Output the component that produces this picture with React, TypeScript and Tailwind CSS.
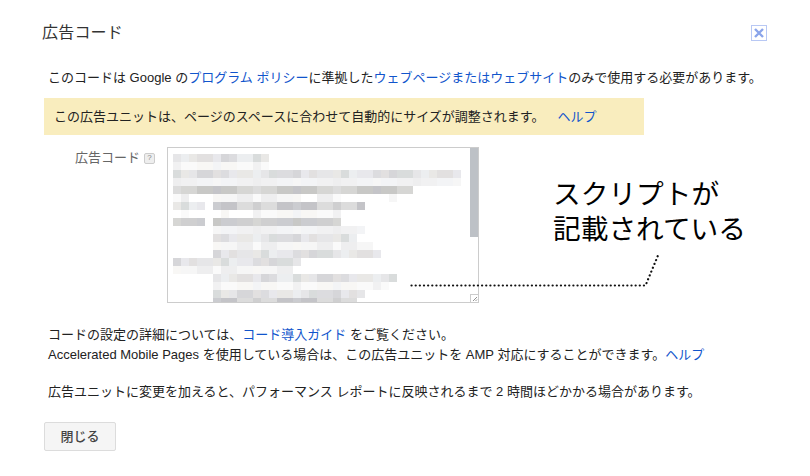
const palette = ["#e6e6e8", "#dcdcdf", "#e9e8e6", "#d6d6d9", "#eceef0", "#e2e0e0", "#d9dcdc", "#e8e8ec"];
const fainter = ["#f6f6f6", "#f1f1f2", "#f8f7f5", "#eeeeef", "#f3f4f6", "#fafafa"];
const darker = ["#cfcfd0", "#c4c4c8", "#d6d6d4", "#cbccd0", "#dcdcdc", "#c8c8c6"];

// [start, end, tone] runs for each row of the blurred script
const rows: [number, number, number][][] = [
  [[0, 11, 0]],
  [[0, 11, 1]],
  [[0, 35, 0]],
  [[0, 35, 1]],
  [[0, 29, 2]],
  [[0, 1, 1], [5, 15, 1], [18, 20, 1], [27, 27, 1]],
  [[0, 3, 0], [5, 23, 2]],
  [[1, 1, 1], [6, 6, 1], [10, 20, 1]],
  [[0, 3, 2], [5, 20, 2]],
  [[5, 23, 1]],
  [[5, 22, 0]],
  [[5, 24, 1]],
  [[5, 25, 0]],
  [[0, 15, 0]],
  [[0, 14, 1]],
  [[5, 27, 0]],
  [[5, 26, 1]],
  [[5, 23, 0]],
  [[5, 22, 2]],
];

const tone = (r: number, c: number, t: number) => {
  const list = t === 2 ? darker : t === 1 ? fainter : palette;
  return list[(r * 7 + c * 3 + ((c * c) % 5)) % list.length];
};

const BlurredCode = () => (
  <div className="flex flex-col">
    {rows.map((runs, r) => (
      <div key={r} className="flex h-2">
        {Array.from({ length: 36 }).map((_, c) => {
          const run = runs.find((x) => c >= x[0] && c <= x[1]);
          return (
            <div
              key={c}
              className="h-2 w-2 shrink-0"
              style={{ backgroundColor: run ? tone(r, c, run[2]) : "transparent" }}
            />
          );
        })}
      </div>
    ))}
  </div>
);

const Link = ({ children }: { children: React.ReactNode }) => (
  <span className="text-[#15c]">{children}</span>
);

export default function App() {
  return (
    <div className="relative h-[476px] w-[810px] overflow-hidden bg-white font-['Liberation_Sans','Noto_Sans_CJK_JP',sans-serif] text-[13px] text-[#222]">
      <div className="flex flex-col pl-11 pr-11">
        <div className="flex h-[63px] items-start justify-between pt-[21px]">
          <h1 className="-ml-0.5 text-base leading-6 font-normal tracking-[0.2px] text-[#333]">広告コード</h1>
          <button className="mt-1 -mr-[1px] flex h-4 w-4 items-center justify-center border border-[#b8c8f4]">
            <svg width="12" height="12" viewBox="0 0 12 12">
              <path d="M2 2L10 10M10 2L2 10" stroke="#8aa4ea" strokeWidth="2.4" />
            </svg>
          </button>
        </div>

        <p className="ml-1 h-[35px] pt-[5px] text-[13px] leading-5 whitespace-nowrap">
          このコードは Google の<Link>プログラム ポリシー</Link>に準拠した<Link>ウェブページまたはウェブサイト</Link>のみで使用する必要があります。
        </p>

        <div className="flex h-[37px] w-[600px] items-center bg-[#f9edbe] pl-[10px] whitespace-nowrap">
          この広告ユニットは、ページのスペースに合わせて自動的にサイズが調整されます。
          <span className="ml-[13px]"><Link>ヘルプ</Link></span>
        </div>

        <div className="mt-3 flex">
          <div className="flex w-[111px] justify-end pt-[1px]">
            <span className="flex h-5 items-center gap-1 whitespace-nowrap text-[#666]">
              広告コード
              <span className="flex h-[11px] w-[11px] items-center justify-center rounded-[2px] border border-[#ccc] bg-[#eee] text-[8px] leading-none text-[#888]">?</span>
            </span>
          </div>
          <div className="relative ml-[12px] h-[156px] w-[312px] overflow-hidden border border-[#ccc] bg-white pt-[6px] pl-[5px]">
            <BlurredCode />
            <div className="absolute top-0 right-0 h-[89px] w-2 bg-[#bdc1c6]" />
            <div className="absolute right-0 bottom-0 flex h-2 w-2 items-center justify-center border-t border-l border-[#ccc] bg-white">
              <svg width="6" height="6" viewBox="0 0 6 6">
                <path d="M1 5L5 1M3.5 5L5 3.5" stroke="#777" strokeWidth="0.8" />
              </svg>
            </div>
          </div>
        </div>

        <div className="mt-[22px] ml-1 flex flex-col leading-5 whitespace-nowrap">
          <p>コードの設定の詳細については、<Link>コード導入ガイド</Link> をご覧ください。</p>
          <p>Accelerated Mobile Pages を使用している場合は、この広告ユニットを AMP 対応にすることができます。<Link>ヘルプ</Link></p>
          <p className="mt-[17px]">広告ユニットに変更を加えると、パフォーマンス レポートに反映されるまで 2 時間ほどかかる場合があります。</p>
        </div>

        <button className="mt-5 h-[29px] w-[72px] rounded-[2px] border border-[#dcdcdc] bg-[#f5f5f5] text-[13px] font-medium text-[#444]">
          閉じる
        </button>
      </div>

      {/* annotation drawn on top of the screenshot */}
      <p className="absolute top-[177px] left-[553px] text-[27.7px] leading-[35px] whitespace-nowrap text-black">
        スクリプトが
        <br />
        記載されている
      </p>
      <svg className="absolute top-[250px] left-[408px]" width="256" height="40" viewBox="0 0 256 40">
        <path
          d="M3.5 35.5H237.5L251 3"
          fill="none"
          stroke="#111"
          strokeWidth="2.2"
          strokeLinecap="round"
          strokeDasharray="0.1 4.05"
        />
      </svg>
    </div>
  );
}
